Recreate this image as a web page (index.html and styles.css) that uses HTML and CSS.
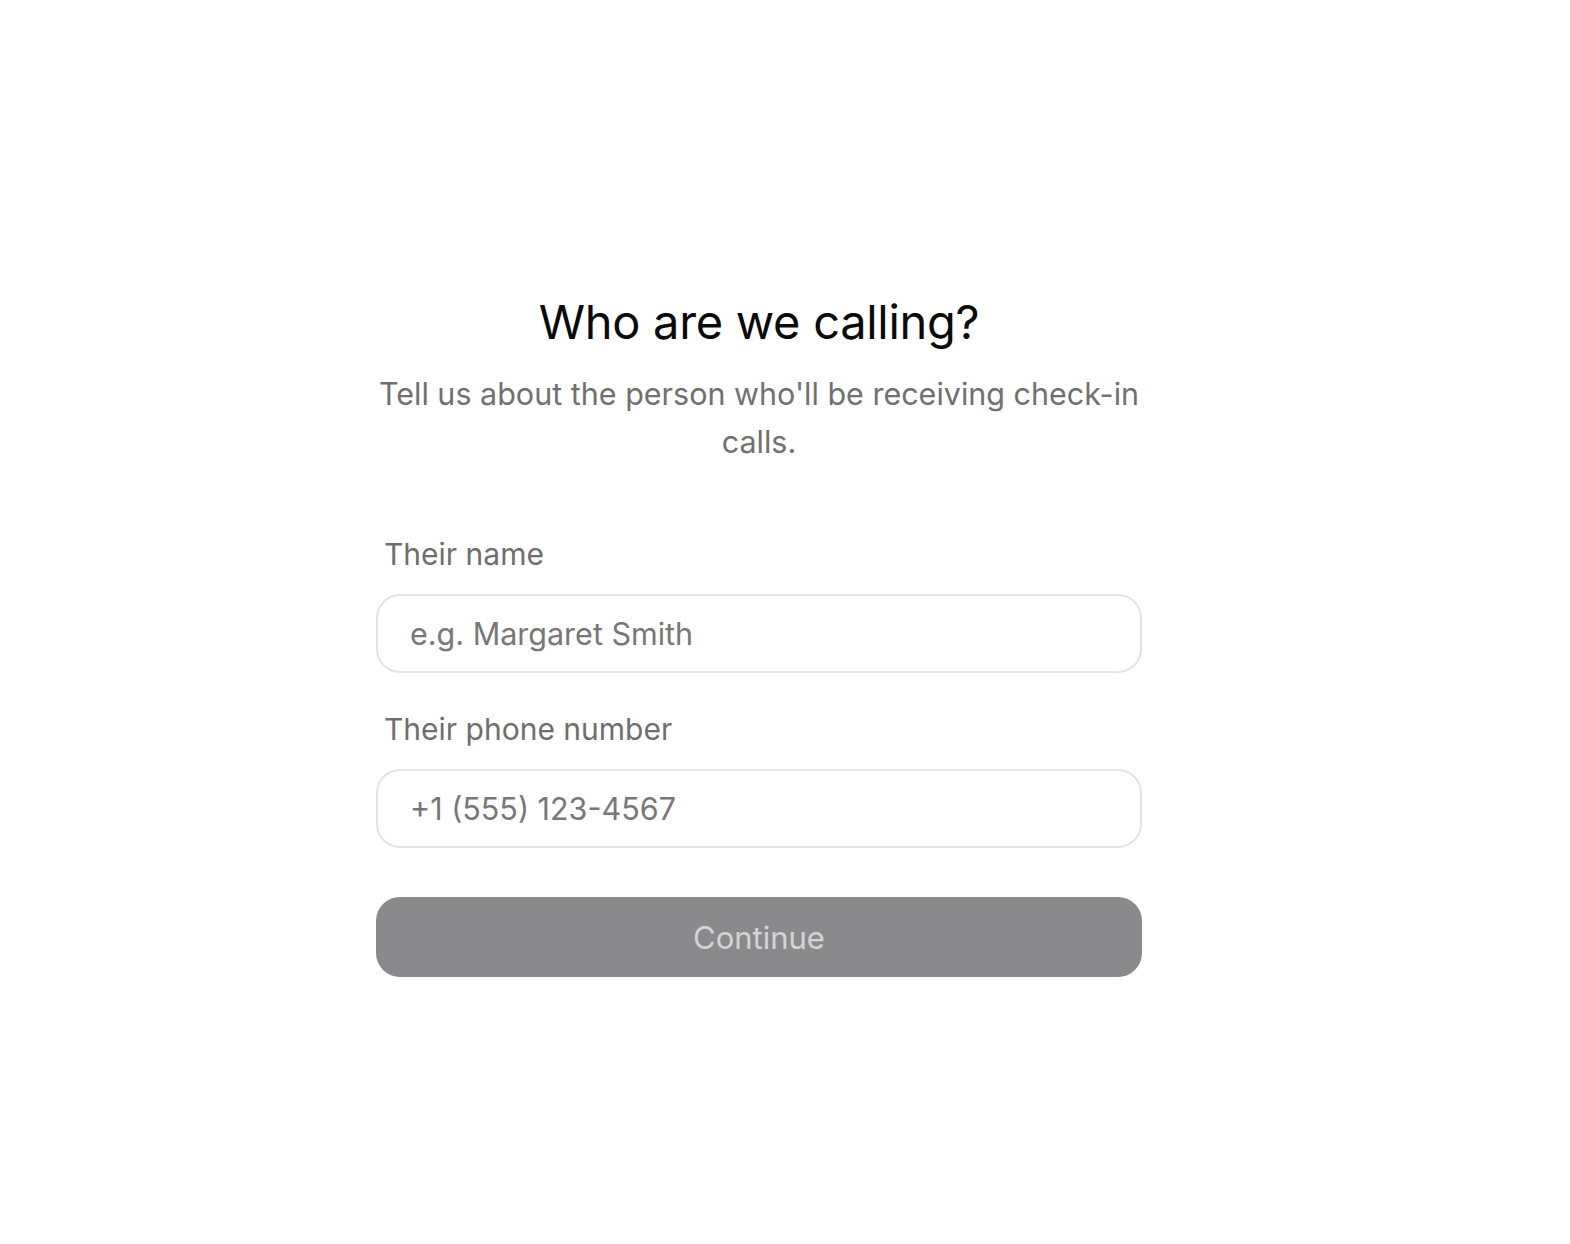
FILE: index.html
```html
<!DOCTYPE html>
<html lang="en">
<head>
<meta charset="utf-8">
<title>Who are we calling?</title>
<link rel="stylesheet" href="styles.css">
</head>
<body>
<main class="page">
  <form class="card" onsubmit="return false;">
    <h1 class="title">Who are we calling?</h1>
    <p class="subtitle">Tell us about the person who'll be receiving check-in calls.</p>
    <div class="field">
      <label class="label" for="name">Their name</label>
      <input class="input" id="name" type="text" placeholder="e.g. Margaret Smith">
    </div>
    <div class="field field-second">
      <label class="label" for="phone">Their phone number</label>
      <input class="input" id="phone" type="tel" placeholder="+1 (555) 123-4567">
    </div>
    <button class="button" type="submit" disabled>Continue</button>
  </form>
</main>
</body>
</html>
```
FILE: styles.css
```css
* { box-sizing: border-box; }
html, body { margin: 0; padding: 0; background: #ffffff; }
body {
  font-family: Inter, "Noto Sans", "Liberation Sans", sans-serif;
  color: #111111;
}
.page {
  min-height: 1244px;
  display: flex;
  justify-content: center;
  padding-top: 295px;
  padding-right: 52px;
}
.card {
  width: 766px;
  display: flex;
  flex-direction: column;
}
.title {
  margin: 0;
  font-size: 47px;
  line-height: 54px;
  font-weight: 400;
  text-align: center;
  color: #0a0a0a;
  letter-spacing: -0.3px;
}
.subtitle {
  margin: 21px 0 0;
  font-size: 30.5px;
  line-height: 48px;
  text-align: center;
  color: #707070;
}
.field {
  display: flex;
  flex-direction: column;
  margin-top: 70px;
}
.field-second { margin-top: 38px; }
.label {
  font-size: 30px;
  line-height: 36px;
  color: #6e6e6e;
  padding-left: 8px;
  margin-bottom: 22px;
}
.input {
  height: 79px;
  border: 2px solid #e4e4e4;
  border-radius: 24px;
  padding: 0 32px;
  font-family: inherit;
  font-size: 30.5px;
  color: #222;
  background: #fff;
  outline: none;
}
.input::placeholder { color: #777777; }
.button {
  margin-top: 49px;
  height: 80px;
  border: none;
  border-radius: 24px;
  background: #8a8a8c;
  color: #d4d4d4;
  font-family: inherit;
  font-size: 31px;
}
```
